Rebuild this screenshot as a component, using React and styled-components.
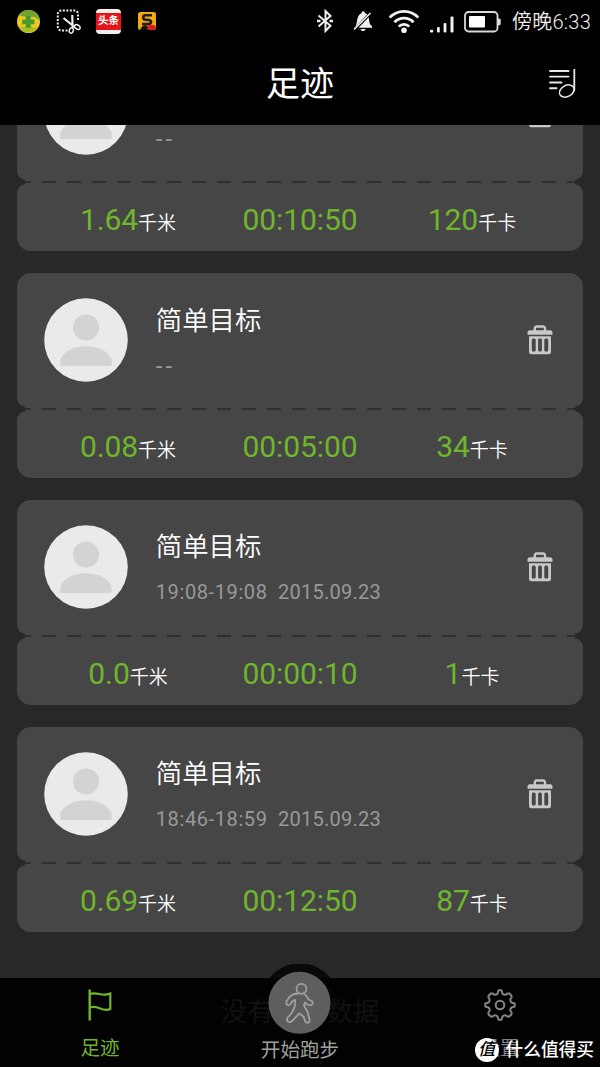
import React from 'react';
import styled, { createGlobalStyle } from 'styled-components';

const GlobalStyle = createGlobalStyle`
  * { box-sizing: border-box; }
  body { margin: 0; background: #282828; }
  svg { display: block; flex: none; }
`;

const green = '#70b52c';

const Screen = styled.div`
  position: relative;
  width: 600px;
  height: 1067px;
  overflow: hidden;
  display: flex;
  flex-direction: column;
  background: #282828;
  color: #fff;
  font-family: Roboto, 'Noto Sans CJK SC', sans-serif;
`;

const StatusBar = styled.div`
  flex: none;
  height: 42px;
  display: flex;
  justify-content: space-between;
  align-items: center;
  padding: 0 9px 0 17px;
  background: #000;
`;

const AppIcons = styled.div`
  display: flex;
  align-items: center;
  gap: 16px;
`;

const SystemIcons = styled.div`
  display: flex;
  align-items: center;
`;

const IconSlot = styled.div`
  margin-right: ${(p) => p.$gap}px;
`;

const Clock = styled.span`
  padding-top: 2px;
  font-size: 20px;
  font-weight: 350;
  line-height: 42px;
  letter-spacing: 0.25px;
  white-space: nowrap;
  color: #ececec;
`;

const Header = styled.header`
  flex: none;
  height: 83px;
  display: grid;
  grid-template-columns: 1fr auto 1fr;
  align-items: center;
  padding: 0 24px;
  background: #000;
`;

const Title = styled.h1`
  grid-column: 2;
  margin: 0;
  padding-top: 1px;
  font-size: 34px;
  line-height: 82px;
  font-weight: 400;
`;

const PlaylistButton = styled.div`
  justify-self: end;
`;

const List = styled.main`
  flex: 1;
  min-height: 0;
  overflow: hidden;
  padding: 0 17.4px;
`;

const ListInner = styled.div`
  margin-top: -78.7px;
  display: flex;
  flex-direction: column;
  gap: 21.8px;
`;

const Card = styled.article`
  display: flex;
  flex-direction: column;
  height: 205px;
`;

const CardTop = styled.div`
  height: 134px;
  display: flex;
  align-items: center;
  padding: 0 30px 0 26.4px;
  background: #464646;
  border-radius: 14px 14px 9px 9px;
`;

const Perforation = styled.div`
  height: 4px;
  margin: 0 8px;
  background:
    repeating-linear-gradient(to right, #2f2f2f 0 6px, #464646 6px 17px, #2f2f2f 17px 25px) 0 1px / 100% 2px no-repeat,
    #464646;
`;

const CardStats = styled.div`
  height: 67px;
  display: grid;
  grid-template-columns: repeat(3, 172px);
  justify-content: center;
  background: #464646;
  border-radius: 9px 9px 14px 14px;
`;

const Info = styled.div`
  flex: 1;
  margin-left: 28px;
  padding-top: 3px;
  display: flex;
  flex-direction: column;
  gap: 18px;
`;

const Goal = styled.div`
  font-size: 26.4px;
  font-weight: 350;
  line-height: 30px;
`;

const When = styled.div`
  display: flex;
  gap: 10.5px;
  font-size: ${(p) => (p.$empty ? '24px' : '20px')};
  line-height: 24px;
  letter-spacing: ${(p) => (p.$empty ? '3px' : '0.6px')};
  color: #999;
`;

const DateText = styled.span`
  letter-spacing: 0.25px;
`;

const Stat = styled.div`
  text-align: center;
  font-size: 30px;
  letter-spacing: -0.1px;
  line-height: 72px;
  white-space: nowrap;
  color: ${green};
`;

const Unit = styled.span`
  font-size: 19px;
  font-weight: 350;
  letter-spacing: 0;
  color: #fff;
`;

const EndOfList = styled.div`
  margin-top: 62.3px;
  text-align: center;
  font-size: 26.4px;
  font-weight: 350;
  line-height: 36px;
  color: #e8e8e8;
`;

const TabBar = styled.nav`
  position: absolute;
  left: 0;
  right: 0;
  bottom: 0;
  height: 89px;
  display: grid;
  grid-template-columns: repeat(3, 1fr);
  background: rgba(0, 0, 0, 0.93);
`;

const Tab = styled.div`
  display: flex;
  flex-direction: column;
  align-items: center;
  justify-content: flex-start;
  padding-top: 11px;
  gap: 17px;
  color: ${(p) => (p.$active ? green : '#858585')};
`;

const StartTab = styled(Tab)`
  padding-top: 0;
  margin-top: -14px;
  gap: 0;
  color: #a0a0a0;
`;

const TabLabel = styled.span`
  font-size: 19.6px;
  line-height: 22px;
`;

const StartLabel = styled(TabLabel)`
  margin-top: -4px;
  line-height: 26px;
`;

const Watermark = styled.div`
  position: absolute;
  right: 6px;
  bottom: 5px;
  height: 24px;
  display: flex;
  align-items: center;
  gap: 7px;
  font-size: 17.7px;
  font-weight: 500;
  line-height: 24px;
  color: #fff;
`;

const Seal = styled.span`
  width: 24px;
  height: 24px;
  border-radius: 50%;
  background: #fff;
  color: #000;
  text-align: center;
  font-size: 17px;
  font-weight: 500;
  line-height: 23px;
  font-style: italic;
`;

const SafetyIcon = () => (
  <svg width="23" height="23" viewBox="0 0 23 23">
    <circle cx="11.5" cy="11.5" r="11.5" fill="#ecc820" />
    <path d="M2 5A11.500 11.500 0 0 1 21 5C22 7 23 9 22.500 11C19 4 10 9 2 5Z" fill="#6da52e" />
    <path d="M1 16C5 20 9 14 14 17C17 18.500 19 18 21 17C17 24 6 25 1 16Z" fill="#a9bd28" />
    <path d="M8.800 6h5v3.500h3.700v4.800h-3.700v3.500h-5v-3.500H5.300V9.500h3.500z" fill="#479a2c" />
  </svg>
);

const ScissorsIcon = () => (
  <svg width="25" height="25" viewBox="0 0 25 25" fill="none" stroke="#eee">
    <path d="M11.500 21.500H5A3.500 3.500 0 0 1 1.800 18V5A3.500 3.500 0 0 1 5 1.500H18.500A3.500 3.500 0 0 1 22 5V12.500" strokeWidth="2" strokeDasharray="2 1.500" />
    <path d="M7.500 9L18.500 18M16.200 6L16.700 19" strokeWidth="2.200" />
    <ellipse cx="15.300" cy="21.500" rx="2" ry="2.700" strokeWidth="1.500" transform="rotate(15 15.3 21.5)" />
    <ellipse cx="21.300" cy="18" rx="3" ry="2" strokeWidth="1.500" transform="rotate(30 21.3 18)" />
  </svg>
);

const NewsBadge = styled.div`
  width: 25px;
  height: 25px;
  margin-left: -1px;
  border-radius: 4px;
  display: flex;
  align-items: center;
  background: #f3eeee;
`;

const NewsLabel = styled.div`
  width: 25px;
  height: 17px;
  background: #e5141b;
  text-align: center;
  font-size: 10.5px;
  font-weight: 700;
  line-height: 16px;
`;

const SIcon = () => (
  <svg width="20" height="20" viewBox="0 0 20 20">
    <rect x="1" y="1" width="18" height="18" rx="2.500" fill="#f2aa14" />
    <path d="M15 4.200H8.500C5.500 4.200 5.500 8.500 8.500 8.700L12 9C15 9.300 14.500 13 11.500 13H5" fill="none" stroke="#201a10" strokeWidth="2.600" />
    <path d="M3 19C5 13 10 13 13 17V19Z" fill="#171310" />
    <ellipse cx="14.500" cy="16.500" rx="4.500" ry="2.700" fill="#dc1d1d" />
  </svg>
);

const BluetoothIcon = () => (
  <svg width="16" height="24" viewBox="0 0 16 24" fill="none" stroke="#eee" strokeWidth="2">
    <path d="M1.500 6.500L13.500 16.800L8.500 22V2L13.500 7L1.500 17.500" />
    <path d="M0 12h3.500M12.500 12H16" strokeWidth="2.400" />
  </svg>
);

const MutedBellIcon = () => (
  <svg width="20" height="22" viewBox="0 0 20 22">
    <path d="M1 18C4 16 3.500 12 4.500 8.500C5.300 5.500 6.500 4 8.500 3.300C8.500 .5 12 .5 12 3.300L14.500 4.300L1.500 18Z" fill="#eee" />
    <path d="M5.500 17.800L15.700 7.300C16.500 11 16 14.500 19 16V17.800Z" fill="#eee" />
    <path d="M7.500 19h5C12 21.800 8 21.800 7.500 19Z" fill="#eee" />
    <path d="M1 19.500L17.500 3" stroke="#eee" strokeWidth="1.600" />
  </svg>
);

const WifiIcon = () => (
  <svg width="32" height="25" viewBox="0 0 32 25" fill="none" stroke="#f2f2f2" strokeWidth="2.800">
    <path d="M1.700 8.500C9.500 .2 22.500 .2 30.300 8.500" />
    <path d="M6.500 13.200C11.500 7.700 20.500 7.700 25.500 13.200" />
    <path d="M10.800 17.600C13.500 14.600 18.500 14.600 21.200 17.600" />
    <circle cx="16" cy="21.300" r="2.800" fill="#f2f2f2" stroke="none" />
  </svg>
);

const SignalIcon = () => (
  <svg width="24" height="23" viewBox="0 -6 24 23" fill="#f2f2f2">
    <rect x="0" y="13.700" width="3.200" height="2.800" rx="1" />
    <rect x="7" y="11" width="2.800" height="5.500" rx="1" />
    <rect x="13.600" y="7" width="2.800" height="9.500" rx="1" />
    <rect x="20.500" y="0.500" width="3" height="16" rx="1" />
  </svg>
);

const BatteryIcon = () => (
  <svg width="37" height="24" viewBox="0 -2 37 24">
    <rect x="1" y="1" width="32.500" height="19.500" rx="3.500" fill="none" stroke="#d8d8d8" strokeWidth="1.800" />
    <rect x="5" y="5" width="16" height="11.500" rx="1" fill="#fff" />
    <path d="M34 7.500h1.200a1.500 1.500 0 0 1 1.500 1.500v3.800a1.500 1.500 0 0 1-1.500 1.500H34z" fill="#ddd" />
  </svg>
);

const PlaylistIcon = () => (
  <svg width="27" height="30" viewBox="0 0 27 30" fill="none" stroke="#e8e8e8" strokeLinecap="round">
    <path d="M1 2H19.500M1 7.600H19.500M1 13.500H12.500M1 19.200H7.500" strokeWidth="1.900" />
    <path d="M25.300 .8V21" strokeWidth="1.800" />
    <ellipse cx="17.800" cy="22" rx="7.800" ry="5.600" transform="rotate(-28 17.8 22)" strokeWidth="1.500" />
  </svg>
);

const Avatar = () => (
  <svg width="84" height="84" viewBox="0 0 84 84">
    <circle cx="42" cy="42" r="41.800" fill="#eaeaea" />
    <circle cx="42" cy="29.500" r="13" fill="#d3d3d3" />
    <path d="M16.300 68V61.500C20 53 30 48.300 42 48.300S64 53 67.600 61.500V68Z" fill="#d3d3d3" />
  </svg>
);

const TrashIcon = () => (
  <svg width="26" height="30" viewBox="0 0 26 30">
    <path d="M7.800 7V3.200A1.700 1.700 0 0 1 9.500 1.500H16.300A1.700 1.700 0 0 1 18 3.200V7" fill="none" stroke="#c8c8c8" strokeWidth="2.400" />
    <path d="M3 5.300H23A2.500 2.500 0 0 1 25.500 7.800V9.700H.5V7.800A2.500 2.500 0 0 1 3 5.300Z" fill="#c8c8c8" />
    <path fillRule="evenodd" fill="#c8c8c8" d="M2 11.200H24V27A2.300 2.300 0 0 1 21.700 29.300H4.300A2.300 2.300 0 0 1 2 27ZM6.300 13.500A1.500 1.500 0 0 0 4.800 15V25A1.500 1.500 0 0 0 6.300 26.500H7.200A1.500 1.500 0 0 0 8.700 25V15A1.500 1.500 0 0 0 7.200 13.500ZM12.600 13.500A1.500 1.500 0 0 0 11.100 15V25A1.500 1.500 0 0 0 12.600 26.500H13.400A1.500 1.500 0 0 0 14.900 25V15A1.500 1.500 0 0 0 13.400 13.500ZM18.800 13.500A1.500 1.500 0 0 0 17.300 15V25A1.500 1.500 0 0 0 18.800 26.500H19.700A1.500 1.500 0 0 0 21.200 25V15A1.500 1.500 0 0 0 19.700 13.500Z" />
  </svg>
);

const FlagIcon = () => (
  <svg width="24" height="32" viewBox="0 0 24 32" fill="none" stroke="currentColor" strokeWidth="2">
    <path d="M1.700 .5V31.500" strokeWidth="2.400" />
    <path d="M2 5C10 2 13 8.500 22.300 4.500V20C14 24 11 15.500 2 18.500" strokeWidth="2.200" />
  </svg>
);

const RunnerIcon = () => (
  <svg width="78" height="78" viewBox="0 0 78 78">
    <path d="M8.500 14A39 39 0 0 1 69.500 14Z" fill="#090909" />
    <circle cx="38.500" cy="38.800" r="31" fill="#5e5e5e" />
    <g fill="none" stroke="#a0a0a0" strokeWidth="1.800" strokeLinejoin="round">
      <circle cx="40.500" cy="24.800" r="5" />
      <path d="M37.500 29.500C32 29.500 28 32 25.500 37.500C24.500 41 28 42.500 29.500 40C30.500 38 31.500 36.500 34 36C35 41 33.500 44.500 31 48.500L26.300 54C25 57.500 28.500 59.500 31 57L38.300 49.500L42.500 52.500L44 57C45.500 60 49.500 59 48.500 55L46.500 48C45.500 45 43 43.500 43 40.500L44 38.500C46.500 41.500 50 42 51.500 40C52.500 37.500 50.500 36.500 48.500 36C46.500 35.500 46 31 43 30" />
    </g>
  </svg>
);

const GearIcon = () => (
  <svg width="32" height="32" viewBox="0 0 32 32" fill="none" stroke="currentColor" strokeWidth="2" strokeLinejoin="round">
    <circle cx="16" cy="16" r="4.300" />
    <path d="M14.500 1.300H17.500L18.500 4.700Q21 7 23.300 4.500L25.300 4.500L27.500 6.700V8.700Q25 11 27.500 13.500L30.700 14.500V17.500L27.500 18.500Q25 21 27.500 23.300V25.300L25.300 27.500H23.300Q21 25 18.500 27.500L17.500 30.700H14.500L13.500 27.500Q11 25 8.700 27.500H6.700L4.500 25.300V23.300Q7 21 4.500 18.500L1.300 17.500V14.500L4.500 13.500Q7 11 4.500 8.700V6.700L6.700 4.500H8.700Q11 7 13.500 4.700Z" />
  </svg>
);

const runs = [
  { km: '1.64', time: '00:10:50', kcal: '120' },
  { km: '0.08', time: '00:05:00', kcal: '34' },
  { span: '19:08-19:08', date: '2015.09.23', km: '0.0', time: '00:00:10', kcal: '1' },
  { span: '18:46-18:59', date: '2015.09.23', km: '0.69', time: '00:12:50', kcal: '87' },
];

const RunCard = ({ run }) => (
  <Card>
    <CardTop>
      <Avatar />
      <Info>
        <Goal>简单目标</Goal>
        <When $empty={!run.span}>
          <span>{run.span || '--'}</span>
          {run.date && <DateText>{run.date}</DateText>}
        </When>
      </Info>
      <TrashIcon />
    </CardTop>
    <Perforation />
    <CardStats>
      <Stat>{run.km}<Unit>千米</Unit></Stat>
      <Stat>{run.time}</Stat>
      <Stat>{run.kcal}<Unit>千卡</Unit></Stat>
    </CardStats>
  </Card>
);

export default function App() {
  return (
    <Screen>
      <GlobalStyle />
      <StatusBar>
        <AppIcons>
          <SafetyIcon />
          <ScissorsIcon />
          <NewsBadge><NewsLabel>头条</NewsLabel></NewsBadge>
          <SIcon />
        </AppIcons>
        <SystemIcons>
          <IconSlot $gap={20}><BluetoothIcon /></IconSlot>
          <IconSlot $gap={15}><MutedBellIcon /></IconSlot>
          <IconSlot $gap={10}><WifiIcon /></IconSlot>
          <IconSlot $gap={10}><SignalIcon /></IconSlot>
          <IconSlot $gap={11}><BatteryIcon /></IconSlot>
          <Clock>傍晚6:33</Clock>
        </SystemIcons>
      </StatusBar>
      <Header>
        <Title>足迹</Title>
        <PlaylistButton><PlaylistIcon /></PlaylistButton>
      </Header>
      <List>
        <ListInner>
          {runs.map((run) => <RunCard key={run.km} run={run} />)}
        </ListInner>
        <EndOfList>没有更多数据</EndOfList>
      </List>
      <TabBar>
        <Tab $active>
          <FlagIcon />
          <TabLabel>足迹</TabLabel>
        </Tab>
        <StartTab>
          <RunnerIcon />
          <StartLabel>开始跑步</StartLabel>
        </StartTab>
        <Tab>
          <GearIcon />
          <TabLabel>设置</TabLabel>
        </Tab>
      </TabBar>
      <Watermark><Seal>值</Seal>什么值得买</Watermark>
    </Screen>
  );
}
